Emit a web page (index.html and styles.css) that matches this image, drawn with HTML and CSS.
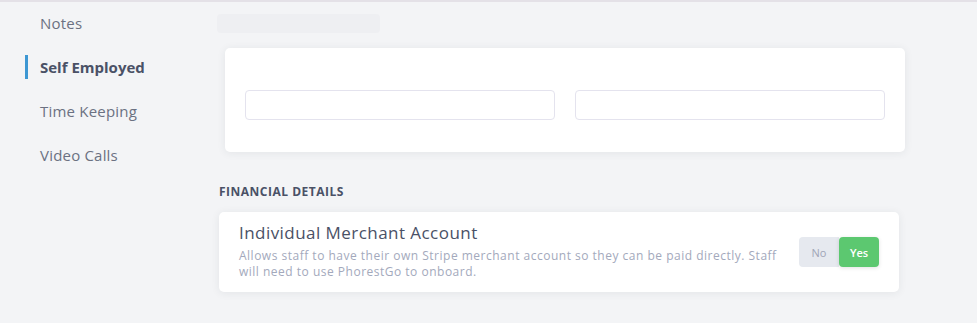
FILE: index.html
```html
<!DOCTYPE html>
<html lang="en">
<head>
    <meta charset="UTF-8">
    <meta name="viewport" content="width=device-width, initial-scale=1.0">
    <title>Staff Settings</title>
    <link rel="stylesheet" href="styles.css">
</head>
<body>

    <div class="page">
        <nav class="sidebar">
            <a class="nav-item">Notes</a>
            <a class="nav-item active">Self Employed</a>
            <a class="nav-item">Time Keeping</a>
            <a class="nav-item">Video Calls</a>
        </nav>

        <main class="content">
            <div class="skeleton"></div>

            <div class="card fields">
                <input class="field" type="text">
                <input class="field" type="text">
            </div>

            <h3 class="section-title">FINANCIAL DETAILS</h3>

            <div class="card setting">
                <div class="setting-text">
                    <h4>Individual Merchant Account</h4>
                    <p>Allows staff to have their own Stripe merchant account so they can be paid directly. Staff will need to use PhorestGo to onboard.</p>
                </div>
                <div class="toggle">
                    <button class="no">No</button>
                    <button class="yes">Yes</button>
                </div>
            </div>
        </main>
    </div>

</body>
</html>
```

FILE: styles.css
```css
* {
    margin: 0;
    padding: 0;
    box-sizing: border-box;
    font-family: 'Open Sans', 'Noto Sans', sans-serif;
}

body {
    background: #f3f4f6;
    border-top: 2px solid #e4e1e7;
    height: 100vh;
    overflow: hidden;
}

.page {
    display: flex;
}

.sidebar {
    width: 217px;
    padding-top: 9px;
    display: flex;
    flex-direction: column;
    gap: 20px;
}

.nav-item {
    display: block;
    height: 24px;
    line-height: 24px;
    padding-left: 40px;
    font-size: 15px;
    letter-spacing: 0.2px;
    color: #6b7182;
    position: relative;
}

.nav-item.active {
    font-weight: 700;
    letter-spacing: 0;
    color: #4a5166;
}

.nav-item.active::before {
    content: "";
    position: absolute;
    left: 25px;
    top: 0;
    width: 3px;
    height: 24px;
    background: #3d97d3;
}

.content {
    width: 688px;
}

.skeleton {
    width: 163px;
    height: 19px;
    margin-top: 12px;
    background: #eeeff2;
    border-radius: 4px;
}

.card {
    background: #fff;
    border-radius: 5px;
    box-shadow: 0 1px 8px rgba(40, 45, 70, 0.08);
}

.fields {
    margin: 15px 0 0 8px;
    width: 680px;
    height: 104px;
    padding: 42px 20px 0;
    display: flex;
    gap: 20px;
}

.field {
    flex: 1;
    height: 30px;
    border: 1px solid #e4e3ee;
    border-radius: 4px;
    background: #fff;
}

.section-title {
    margin: 31px 0 0 2px;
    font-size: 12px;
    font-weight: 700;
    letter-spacing: 0.5px;
    color: #4a5166;
    line-height: 18px;
}

.setting {
    margin: 11px 0 0 2px;
    width: 680px;
    height: 80px;
    padding: 10px 20px 0;
    display: flex;
    justify-content: space-between;
}

.setting-text h4 {
    font-size: 17px;
    font-weight: 500;
    letter-spacing: 0.45px;
    color: #4a5166;
    line-height: 22px;
}

.setting-text p {
    margin-top: 4px;
    width: 545px;
    font-size: 12px;
    letter-spacing: 0.5px;
    line-height: 16px;
    color: #a3a9bc;
}

.toggle {
    display: flex;
    margin-top: 15px;
    height: 30px;
}

.toggle button {
    width: 40px;
    height: 30px;
    border: none;
    font-size: 11px;
    border-radius: 4px;
}

.no {
    background: #e6e9ef;
    color: #a0a5b6;
    border-top-right-radius: 0 !important;
    border-bottom-right-radius: 0 !important;
}

.yes {
    background: #5cc870;
    color: #fff;
    font-weight: 600;
    box-shadow: 0 1px 4px rgba(0, 0, 0, 0.12);
}
```
